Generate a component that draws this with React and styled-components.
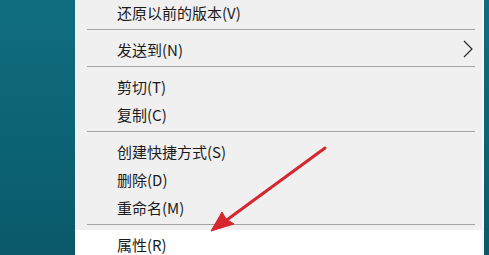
import React from "react";
import styled, { createGlobalStyle } from "styled-components";

const Global = createGlobalStyle`
  html, body { margin: 0; padding: 0; overflow: hidden; }
  body { width: 489px; height: 255px; }
`;

const Desktop = styled.div`
  position: relative;
  width: 489px;
  height: 255px;
  overflow: hidden;
  display: flex;
  padding-left: 75px;
  box-sizing: border-box;
  background: linear-gradient(180deg, #0f6d7f 0%, #0c6375 55%, #0a5869 100%);
`;

const Menu = styled.div`
  width: 407px;
  margin-top: -2px;
  background: #f0f0f0;
  border-right: 2px solid #f7f7f7;
  display: flex;
  flex-direction: column;
  font-family: "Noto Sans CJK SC", "Noto Sans", sans-serif;
  font-size: 15px;
  color: #1b1b1b;
`;

const Item = styled.div`
  height: 28px;
  flex-shrink: 0;
  display: flex;
  align-items: center;
  padding-left: 42px;
  padding-right: 9px;
  background: ${(p) => (p.$active ? "#ffffff" : "transparent")};
  line-height: 1;
`;

const Label = styled.span`
  flex: 1;
  white-space: nowrap;
`;

const Separator = styled.div`
  height: 9px;
  flex-shrink: 0;
  display: flex;
  flex-direction: column;
  padding: 3px 7px 0 12px;
  box-sizing: border-box;
  &::before {
    content: "";
    display: block;
    height: 1px;
    background: #a3a3a3;
  }
`;

const Chevron = () => (
  <svg width="10" height="18" viewBox="0 0 10 18" style={{ display: "block" }}>
    <path d="M1 1 L9 9 L1 17" fill="none" stroke="#2a2a2a" strokeWidth="1.2" />
  </svg>
);

const Overlay = styled.svg`
  position: absolute;
  left: 0;
  top: 0;
  pointer-events: none;
`;

const items = [
  { label: "还原以前的版本(V)" },
  "sep",
  { label: "发送到(N)", sub: true },
  "sep",
  { label: "剪切(T)" },
  { label: "复制(C)" },
  "sep",
  { label: "创建快捷方式(S)" },
  { label: "删除(D)" },
  { label: "重命名(M)" },
  "sep",
  { label: "属性(R)", active: true },
];

export default function App() {
  return (
    <>
      <Global />
      <Desktop>
        <Menu>
          {items.map((it, i) =>
            it === "sep" ? (
              <Separator key={i} />
            ) : (
              <Item key={i} $active={it.active}>
                <Label>{it.label}</Label>
                {it.sub && <Chevron />}
              </Item>
            )
          )}
        </Menu>
        <Overlay width="489" height="255" viewBox="0 0 489 255">
          <line x1="325" y1="148" x2="224" y2="222" stroke="#d6262e" strokeWidth="3" strokeLinecap="round" />
          <path d="M211 231 L222 212 L226 219 L234 224 Z" fill="#d6262e" stroke="#d6262e" strokeWidth="1" strokeLinejoin="round" />
        </Overlay>
      </Desktop>
    </>
  );
}
